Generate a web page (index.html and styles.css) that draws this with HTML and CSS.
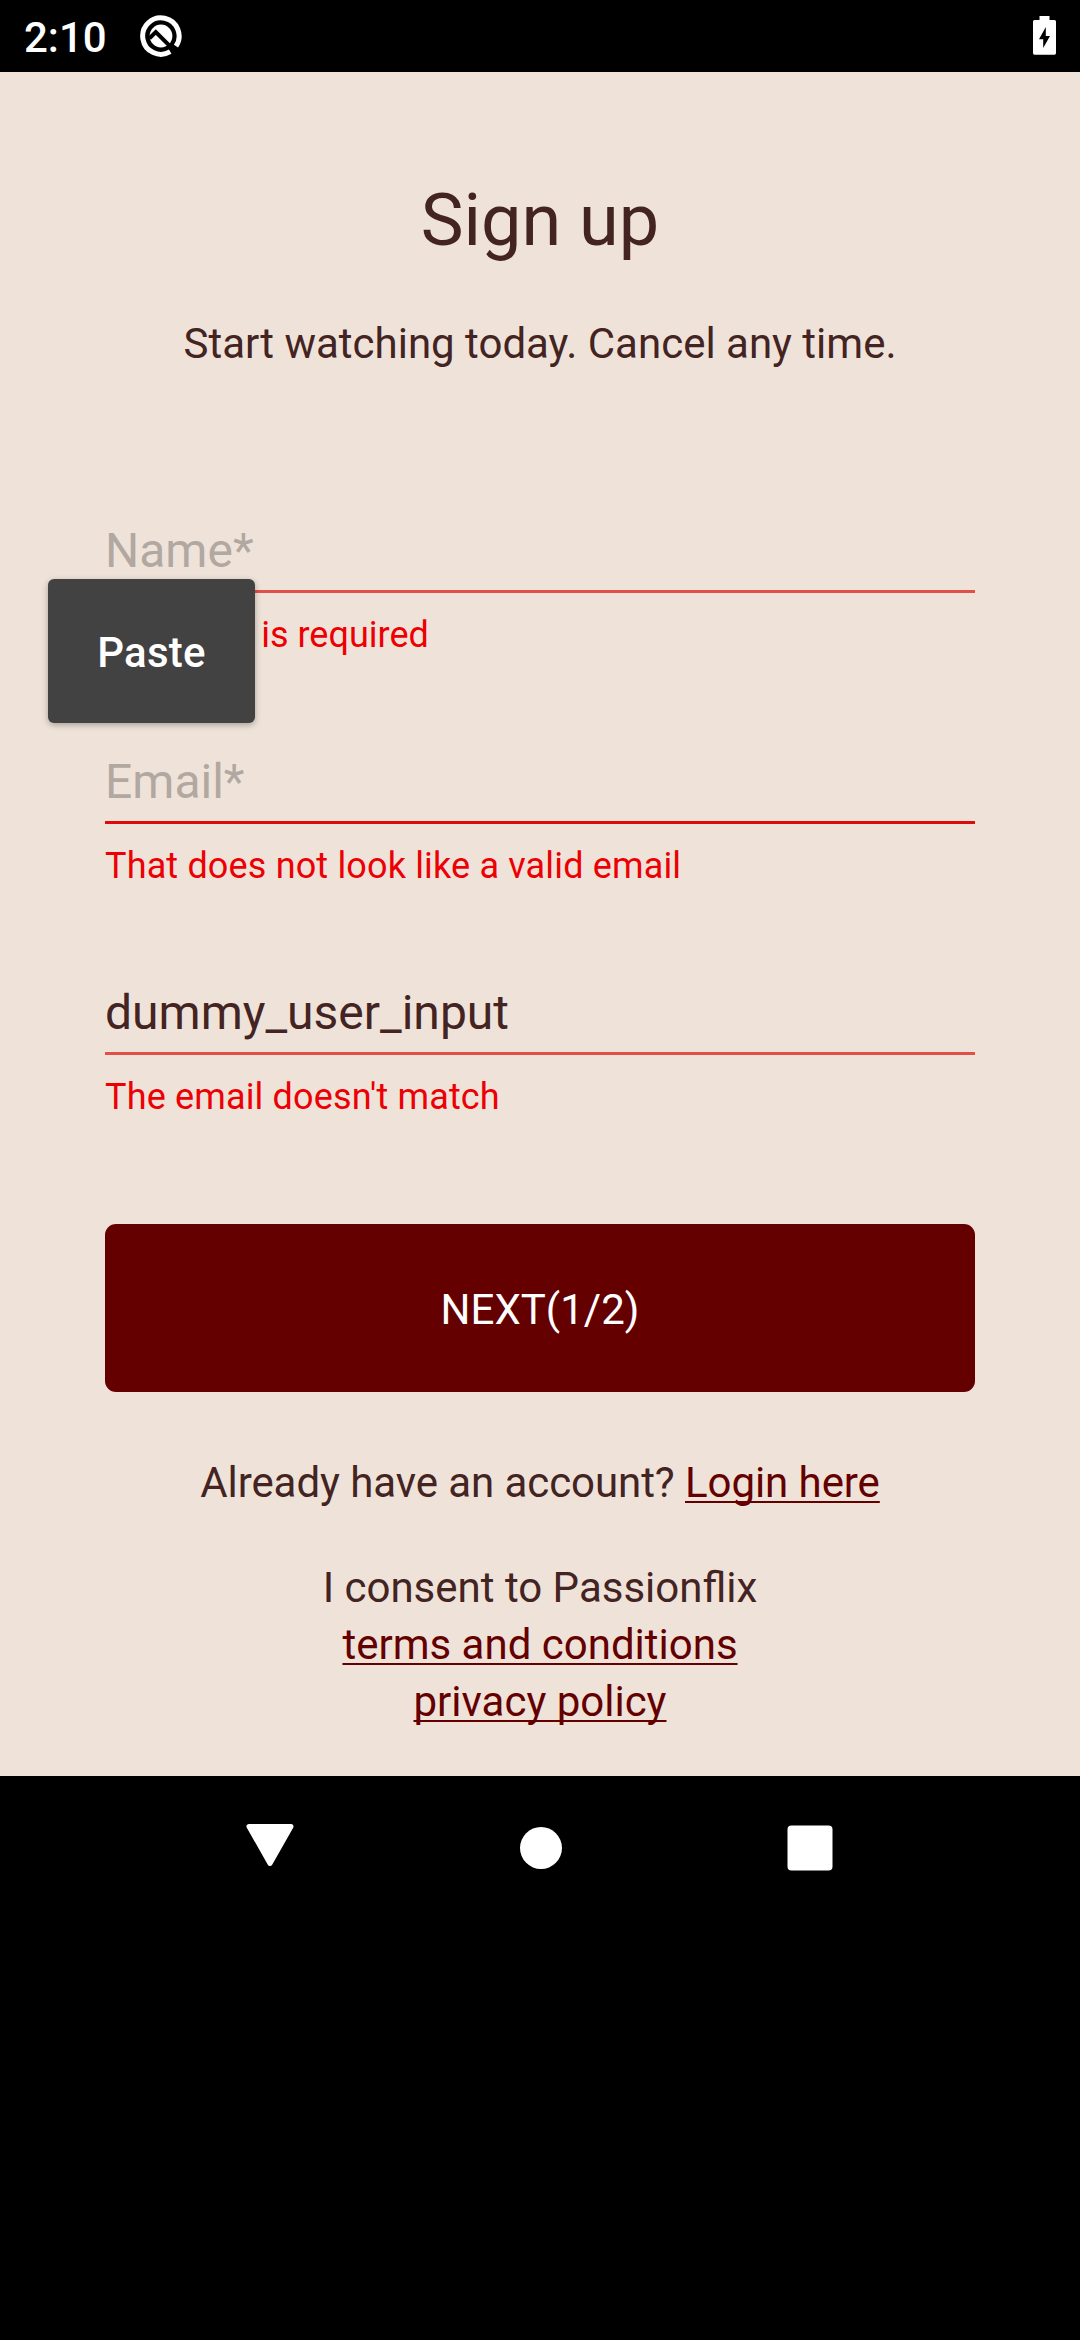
FILE: index.html
```html
<!DOCTYPE html>
<html lang="en">
<head>
<meta charset="utf-8">
<title>Sign up</title>
<link rel="stylesheet" href="styles.css">
</head>
<body>
<header class="status-bar">
  <span class="clock">2:10</span>
  <svg class="status-app" width="42" height="42" viewBox="0 0 42 42">
    <path d="M36 31.200A18.200 18.200 0 1 0 30.200 36.700" fill="none" stroke="#fff" stroke-width="5"/>
    <circle cx="21" cy="21" r="11.400" fill="#fff"/>
    <path d="M9.500 23.200L15.800 17L36 37.200" fill="none" stroke="#000" stroke-width="4"/>
  </svg>
  <svg class="battery" width="23" height="39" viewBox="0 0 23 39">
    <path d="M6.500 0H16.500V4H21.500Q23 4 23 5.500V37Q23 38.700 21.500 38.700H1.500Q0 38.700 0 37V5.500Q0 4 1.500 4H6.500Z" fill="#fff"/>
    <path d="M12.800 11V20H17L10.200 32V23.300H6Z" fill="#000"/>
  </svg>
</header>
<main class="screen">
  <h1 class="title">Sign up</h1>
  <p class="subtitle">Start watching today. Cancel any time.</p>
  <form class="form">
    <div class="field">
      <span class="value placeholder">Name*</span>
      <span class="error required">This field is required</span>
      <div class="paste-menu">Paste</div>
    </div>
    <div class="field focused">
      <span class="value placeholder">Email*</span>
      <span class="error">That does not look like a valid email</span>
    </div>
    <div class="field">
      <span class="value">dummy_user_input</span>
      <span class="error">The email doesn't match</span>
    </div>
    <button class="next" type="button">NEXT(1/2)</button>
  </form>
  <p class="login">Already have an account? <a class="link">Login here</a></p>
  <p class="consent">I consent to Passionflix<br><a class="link">terms and conditions</a><br><a class="link">privacy policy</a></p>
</main>
<nav class="nav-bar">
  <svg width="50" height="48" viewBox="0 0 50 48"><path d="M4 2.500H46L25 39.500Z" fill="#fff" stroke="#fff" stroke-width="5" stroke-linejoin="round"/></svg>
  <svg width="48" height="48" viewBox="0 0 48 48"><circle cx="24" cy="24" r="21" fill="#fff"/></svg>
  <svg width="48" height="48" viewBox="0 0 48 48"><rect x="1.500" y="1.500" width="45" height="45" rx="4" fill="#fff"/></svg>
</nav>
</body>
</html>
```
FILE: styles.css
```css
* { box-sizing: border-box; }

body {
  margin: 0;
  min-height: 2340px;
  background: #000;
  color: #432422;
  font-family: Roboto, sans-serif;
  font-size: 42px;
}

.status-bar {
  display: flex;
  align-items: flex-start;
  height: 72px;
  padding: 0 24px;
  color: #fff;
}

.clock {
  width: 116px;
  padding-top: 13px;
  font-size: 42px;
  font-weight: 500;
  line-height: 50px;
}

.status-app { margin-top: 15px; }

.battery { margin: 16px 0 0 auto; }

.screen {
  height: 1704px;
  padding: 107px 105px 0;
  background: #efe3d9;
}

.title {
  margin: 0;
  font-size: 72px;
  font-weight: 400;
  line-height: 84px;
  text-align: center;
}

.subtitle {
  margin: 56px 0 0;
  line-height: 50px;
  text-align: center;
}

.form {
  display: flex;
  flex-direction: column;
  margin-top: 154px;
}

.field {
  position: relative;
  display: flex;
  flex-direction: column;
  height: 231px;
}

.value {
  height: 70px;
  border-bottom: 3px solid #e05049;
  font-size: 48px;
  line-height: 56px;
}

.focused .value { border-bottom-color: #dd0b09; }

.placeholder { color: #b1a8a1; }

.error {
  margin-top: 21px;
  color: #ec0004;
  font-size: 36px;
  letter-spacing: .16px;
  line-height: 42px;
}

.required { letter-spacing: .02px; }

.paste-menu {
  position: absolute;
  top: 56px;
  left: -57px;
  width: 207px;
  height: 144px;
  border-radius: 6px;
  background: #424242;
  box-shadow: 0 2px 6px rgba(0, 0, 0, .3);
  color: #fff;
  font-weight: 500;
  letter-spacing: .2px;
  line-height: 148px;
  text-align: center;
}

.next {
  height: 168px;
  margin-top: 8px;
  padding: 3px 0 0;
  border: 0;
  border-radius: 11px;
  background: #640000;
  color: #fff;
  font: 400 42px/50px Roboto, sans-serif;
}

.login {
  margin: 66px 0 0;
  letter-spacing: -.07px;
  line-height: 50px;
  text-align: center;
}

.consent {
  margin: 51px 0 0;
  line-height: 57px;
  text-align: center;
}

.link {
  color: #640000;
  text-decoration: underline;
  text-decoration-thickness: 2px;
  text-decoration-skip-ink: none;
  text-underline-offset: 4px;
}

.nav-bar {
  display: flex;
  justify-content: space-between;
  padding: 48px 246px 0 245px;
}
```
